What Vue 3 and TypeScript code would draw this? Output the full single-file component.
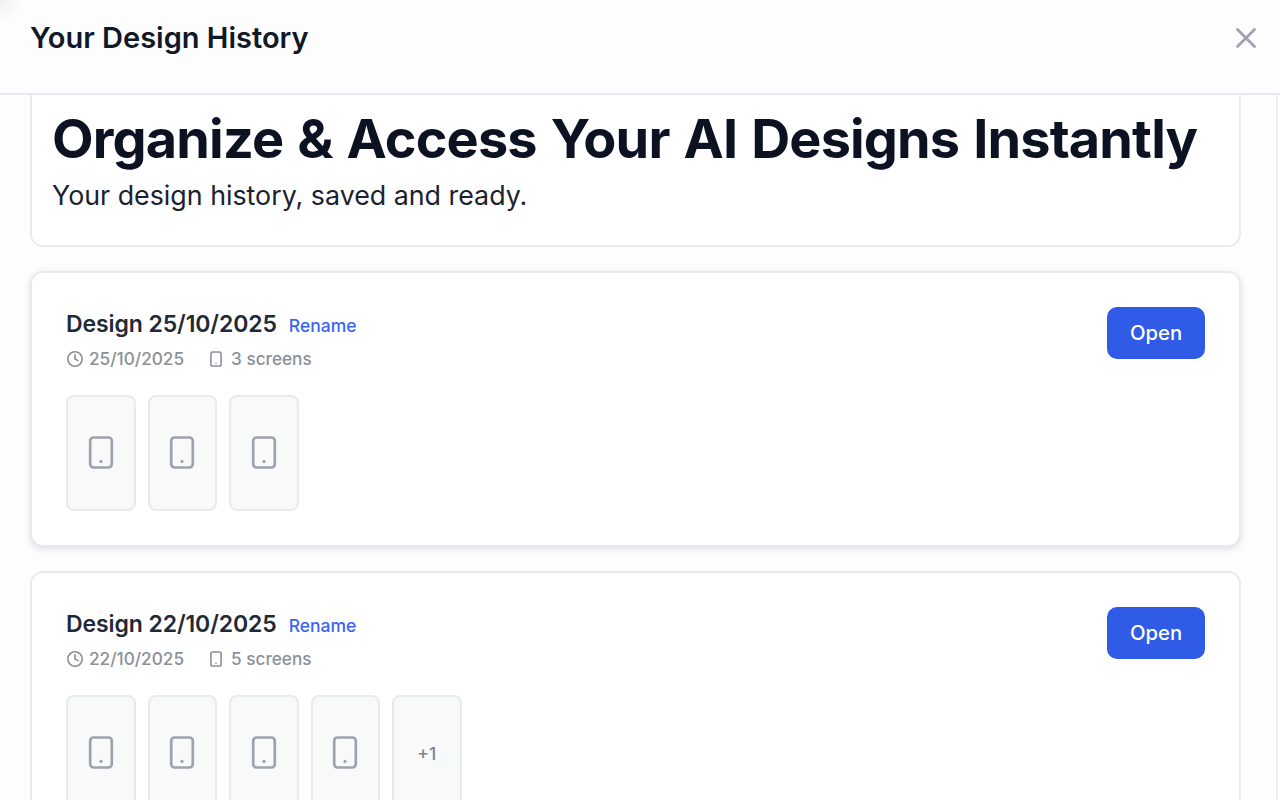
<script setup lang="ts">
interface Design { name: string; date: string; count: number; thumbs: number; more?: number }
const designs: Design[] = [
  { name: 'Design 25/10/2025', date: '25/10/2025', count: 3, thumbs: 3 },
  { name: 'Design 22/10/2025', date: '22/10/2025', count: 5, thumbs: 4, more: 1 },
]
</script>

<template>
  <div class="page">
    <header class="top">
      <h1>Your Design History</h1>
      <svg class="close" width="30" height="30" viewBox="0 0 30 30" fill="none" stroke="#9ca3af" stroke-width="2.8" stroke-linecap="round">
        <path d="M6.5 6.5 23.5 23.5M23.5 6.5 6.5 23.5" />
      </svg>
    </header>
    <main class="body">
      <section class="hero">
        <h2>Organize &amp; Access Your AI Designs Instantly</h2>
        <p>Your design history, saved and ready.</p>
      </section>
      <article v-for="(d, i) in designs" :key="d.name" class="card" :class="{ raised: i === 0 }">
        <div class="row">
          <div>
            <div class="title-row">
              <h3>{{ d.name }}</h3>
              <a class="rename">Rename</a>
            </div>
            <div class="meta">
              <span class="meta-item">
                <svg width="18" height="18" viewBox="0 0 18 18" fill="none" stroke="#8b9099" stroke-width="1.6" stroke-linecap="round" stroke-linejoin="round">
                  <circle cx="9" cy="9" r="7.2" />
                  <path d="M9 4.8V9l3 1.6" />
                </svg>
                {{ d.date }}
              </span>
              <span class="meta-item">
                <svg width="18" height="18" viewBox="0 0 18 18" fill="none" stroke="#8b9099" stroke-width="1.6" stroke-linecap="round">
                  <rect x="2.9" y="2" width="10.2" height="14" rx="1.8" />
                  <path d="M8 13.2h.01" />
                </svg>
                {{ d.count }} screens
              </span>
            </div>
          </div>
          <button class="open">Open</button>
        </div>
        <div class="thumbs">
          <div v-for="n in d.thumbs" :key="n" class="thumb">
            <svg width="30" height="36" viewBox="0 0 30 36" fill="none" stroke="#9ca3af" stroke-width="2.7" stroke-linecap="round">
              <rect x="4.2" y="2.5" width="21.6" height="30" rx="3.4" />
              <path d="M15 26.4h.01" stroke-width="3.2" />
            </svg>
          </div>
          <div v-if="d.more" class="thumb more">+{{ d.more }}</div>
        </div>
      </article>
    </main>
  </div>
</template>

<style>
html, body { margin: 0; background: #fff; overflow: hidden; }
</style>

<style scoped>
.page {
  width: 1280px;
  height: 800px;
  overflow: hidden;
  display: flex;
  flex-direction: column;
  font-family: Inter, "Liberation Sans", sans-serif;
  background: #fdfdfe;
}
.top {
  height: 93px;
  flex: none;
  border-bottom: 2px solid #e6e9ee;
  display: flex;
  align-items: center;
  justify-content: space-between;
  padding: 0 19px 0 30px;
  background: radial-gradient(circle at 0 0, #f1f1f1, rgba(253, 253, 254, 0) 22px);
}
.top h1 {
  margin: 0 0 19px;
  font-size: 29px;
  font-weight: 600;
  color: #111827;
}
.close { margin-bottom: 17px; }
.body {
  flex: 1;
  min-height: 0;
  overflow: hidden;
  padding: 0 35px 0 30px;
  border-right: 2px solid #eceef2;
  margin-right: 2px;
  display: flex;
  flex-direction: column;
  gap: 24px;
}
.hero {
  flex: none;
  height: 152px;
  box-sizing: border-box;
  border: 2px solid #e8eaee;
  border-top: 0;
  border-radius: 0 0 13px 13px;
  background: #fff;
  padding: 14px 20px 0;
}
.hero h2 {
  margin: 0;
  font-size: 54px;
  line-height: 60px;
  font-weight: 700;
  color: #0c1222;
  letter-spacing: -0.85px;
  word-spacing: 2px;
  white-space: nowrap;
}
.hero p {
  margin: 8px 0 0;
  font-size: 26.8px;
  line-height: 36px;
  color: #1a2230;
}
.card {
  flex: none;
  height: 276px;
  box-sizing: border-box;
  border: 2px solid #e8eaee;
  border-radius: 13px;
  background: #fff;
  padding: 33px 34px 0;
}
.card.raised { box-shadow: 0 2px 6px rgba(17, 24, 39, 0.13); }
.row {
  display: flex;
  justify-content: space-between;
  align-items: flex-start;
}
.title-row {
  display: flex;
  align-items: baseline;
  gap: 12px;
}
.title-row h3 {
  margin: 0;
  font-size: 23px;
  line-height: 36px;
  font-weight: 600;
  letter-spacing: -0.1px;
  color: #1f2937;
}
.rename {
  font-size: 17.5px;
  font-weight: 500;
  color: #3b66f5;
}
.meta {
  display: flex;
  gap: 24px;
  margin-top: 4px;
  font-size: 17.2px;
  line-height: 26px;
  font-weight: 500;
  color: #8b9099;
}
.meta-item {
  display: flex;
  align-items: center;
  gap: 5px;
}
.open {
  width: 98px;
  height: 52px;
  margin-top: 1px;
  padding: 0 0 2px;
  border: 0;
  border-radius: 10px;
  background: #2f5be7;
  color: #fff;
  font-family: inherit;
  font-size: 20.3px;
  font-weight: 500;
}
.thumbs {
  display: flex;
  gap: 12px;
  margin-top: 23px;
}
.thumb {
  width: 69.5px;
  height: 116px;
  box-sizing: border-box;
  border: 2px solid #e8eaee;
  border-radius: 8px;
  background: #f8f9f9;
  display: flex;
  align-items: center;
  justify-content: center;
}
.more {
  font-size: 17.5px;
  font-weight: 500;
  color: #7b818c;
}
</style>
